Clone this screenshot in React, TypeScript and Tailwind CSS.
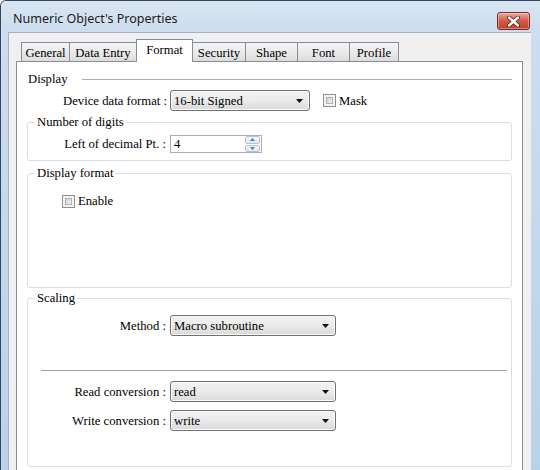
import React from 'react';

const serif = "font-['Liberation_Serif'] text-[12.7px] text-black";

const Arrow = () => (
  <svg width="7" height="4" viewBox="0 0 7 4" className="shrink-0">
    <path d="M0 0h7L3.5 4z" fill="#111" />
  </svg>
);

const Combo = ({ value, width }: { value: string; width: string }) => (
  <div
    className={`${width} h-[21px] flex items-center justify-between pl-[3px] pr-[6px] rounded-[3px] border border-[#707070] bg-gradient-to-b from-[#f2f2f2] via-[#ebebeb] to-[#d9d9d9] shadow-[inset_0_0_0_1px_#fbfbfb]`}
  >
    <span className={`${serif} leading-[14px] pt-px`}>{value}</span>
    <Arrow />
  </div>
);

const Check = () => (
  <span className="w-[13px] h-[13px] border border-[#8e8f8f] bg-[#f4f4f4] p-[2px] shrink-0 flex">
    <span className="flex-1 border border-[#aeb3b9] bg-gradient-to-br from-[#cbcfd5] to-[#f7f7f7]" />
  </span>
);

const Tab = ({ label, width, active }: { label: string; width: string; active?: boolean }) =>
  active ? (
    <div
      className={`${width} ${serif} -ml-px relative z-10 h-[23px] -mb-px border border-b-0 border-[#898c95] bg-white flex justify-center pt-[3px] leading-[14px]`}
    >
      {label}
    </div>
  ) : (
    <div
      className={`${width} ${serif} -ml-px h-[19px] border border-b-0 border-[#898c95] bg-gradient-to-b from-[#f3f3f3] via-[#ebebeb] to-[#dcdcdc] flex justify-center pt-[3px] leading-[14px]`}
    >
      {label}
    </div>
  );

const Label = ({ children, width }: { children: React.ReactNode; width: string }) => (
  <span className={`${width} ${serif} text-right leading-[14px]`}>{children}</span>
);

const Legend = ({ children }: { children: React.ReactNode }) => (
  <legend className={`${serif} ml-[7px] px-[2px] leading-[14px]`}>{children}</legend>
);

export default function App() {
  return (
    <div className="w-[540px] h-[470px] overflow-hidden bg-gradient-to-b from-[#cfdeef] to-[#b9d1ea] border-l border-t border-[#34465a] rounded-tl-[6px]">
      {/* title bar */}
      <div className="h-[31px] flex items-start justify-between bg-gradient-to-b from-[#d9e5f2] to-[#cddcee]">
        <span className="pl-[12px] pt-[10px] leading-[16px] font-['Noto_Sans'] text-[12.5px] text-[#1b1b1b]">
          Numeric Object's Properties
        </span>
        <div className="mt-[11px] mr-[10px] w-[33px] h-[18px] rounded-[3px] border border-[#7a2a20] bg-gradient-to-b from-[#e9a99c] via-[#cf5a48] to-[#c0402c] flex items-center justify-center shadow-[inset_0_0_0_1px_rgba(255,255,255,0.35)]">
          <svg width="13" height="11" viewBox="0 0 13 11">
            <path d="M2 1.5l9 8M11 1.5l-9 8" stroke="#5a1a14" strokeWidth="4" strokeLinecap="round" />
            <path d="M2 1.5l9 8M11 1.5l-9 8" stroke="#fff" strokeWidth="2.4" strokeLinecap="round" />
          </svg>
        </div>
      </div>

      {/* client area */}
      <div className="ml-[7px] w-[523px] h-[440px] bg-[#f0f0f0] border-l border-t border-[#9fb2c6] pt-[6px] pl-[7px] pr-[8px]">
        <div className="h-[22px] flex items-end pl-[6px]">
          <Tab label="General" width="w-[49px]" />
          <Tab label="Data Entry" width="w-[68px]" />
          <Tab label="Format" width="w-[57px]" active />
          <Tab label="Security" width="w-[54px]" />
          <Tab label="Shape" width="w-[53px]" />
          <Tab label="Font" width="w-[53px]" />
          <Tab label="Profile" width="w-[50px]" />
        </div>

        <div className="h-[420px] bg-white border border-[#898c95] pt-[10px] px-[10px]">
          {/* Display */}
          <div className="h-[14px] flex items-center">
            <span className={`${serif} leading-[14px] pl-px`}>Display</span>
            <span className="flex-1 h-px bg-[#a9aeb3] ml-[15px]" />
          </div>
          <div className="mt-[4px] h-[21px] flex items-center">
            <Label width="w-[140px]">Device data format :</Label>
            <div className="ml-[3px]">
              <Combo value="16-bit Signed" width="w-[140px]" />
            </div>
            <span className="ml-[13px]">
              <Check />
            </span>
            <span className={`${serif} ml-[3px] leading-[14px]`}>Mask</span>
          </div>

          {/* Number of digits */}
          <fieldset className="mt-[4px] border border-[#d5dfe5] rounded-[3px] pb-[7px]">
            <Legend>Number of digits</Legend>
            <div className="mt-[6px] h-[18px] flex items-center">
              <Label width="w-[138px]">Left of decimal Pt. :</Label>
              <div className="ml-[4px] w-[92px] h-[18px] border border-[#abadb3] bg-white flex items-center justify-between pl-[3px] pr-px">
                <span className={`${serif} leading-[14px]`}>4</span>
                <div className="w-[15px] h-[16px] flex flex-col gap-px">
                  <div className="flex-1 rounded-[2px] border border-[#b5c3d4] bg-gradient-to-b from-[#f4f7fb] to-[#dfe7f1] flex items-center justify-center">
                    <svg width="5" height="3" viewBox="0 0 5 3"><path d="M0 3L2.5 0L5 3z" fill="#5b7aa3" /></svg>
                  </div>
                  <div className="flex-1 rounded-[2px] border border-[#b5c3d4] bg-gradient-to-b from-[#f4f7fb] to-[#dfe7f1] flex items-center justify-center">
                    <svg width="5" height="3" viewBox="0 0 5 3"><path d="M0 0h5L2.5 3z" fill="#5b7aa3" /></svg>
                  </div>
                </div>
              </div>
            </div>
          </fieldset>

          {/* Display format */}
          <fieldset className="mt-[5px] h-[122px] border border-[#d5dfe5] rounded-[3px]">
            <Legend>Display format</Legend>
            <div className="mt-[14px] ml-[34px] flex items-center">
              <Check />
              <span className={`${serif} ml-[3px] leading-[14px]`}>Enable</span>
            </div>
          </fieldset>

          {/* Scaling */}
          <fieldset className="mt-[3px] h-[176px] border border-[#d5dfe5] rounded-[3px]">
            <Legend>Scaling</Legend>
            <div className="mt-[10px] h-[21px] flex items-center">
              <Label width="w-[138px]">Method :</Label>
              <div className="ml-[4px]">
                <Combo value="Macro subroutine" width="w-[166px]" />
              </div>
            </div>
            <div className="mt-[34px] ml-[13px] mr-[4px] h-px bg-[#a0a0a0]" />
            <div className="mt-[10px] h-[21px] flex items-center">
              <Label width="w-[138px]">Read conversion :</Label>
              <div className="ml-[4px]">
                <Combo value="read" width="w-[166px]" />
              </div>
            </div>
            <div className="mt-[8px] h-[21px] flex items-center">
              <Label width="w-[138px]">Write conversion :</Label>
              <div className="ml-[4px]">
                <Combo value="write" width="w-[166px]" />
              </div>
            </div>
          </fieldset>
        </div>
      </div>
    </div>
  );
}
